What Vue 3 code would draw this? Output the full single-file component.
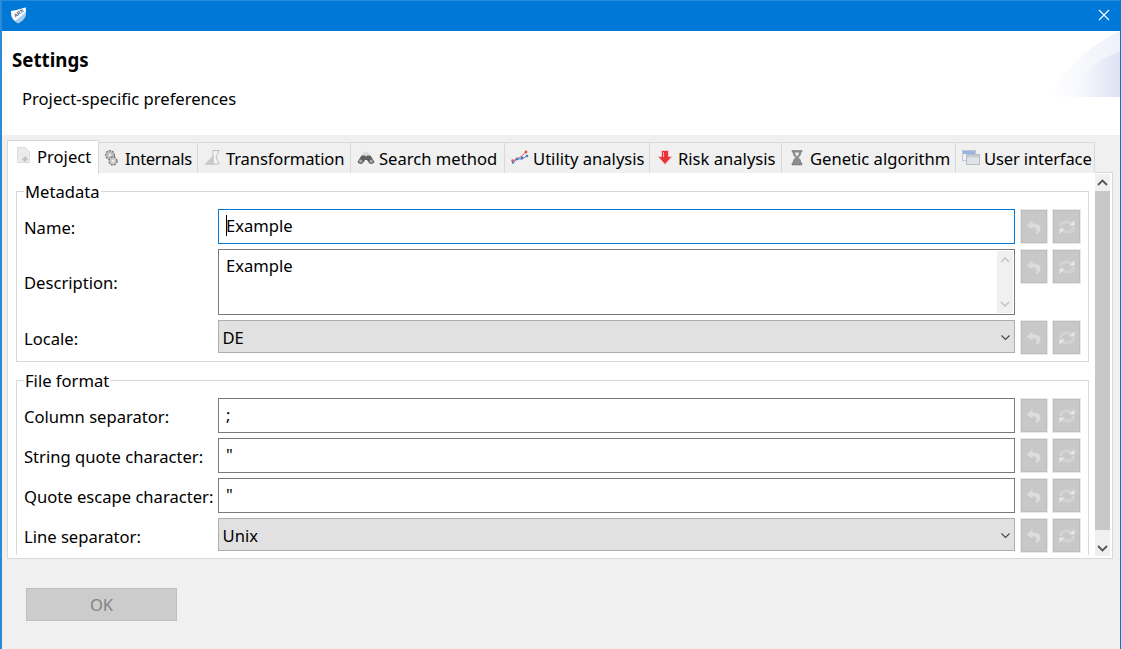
<script setup>
const tabs = [
  { key: 'project', label: 'Project', w: 92 },
  { key: 'internals', label: 'Internals', w: 99 },
  { key: 'transformation', label: 'Transformation', w: 153 },
  { key: 'search', label: 'Search method', w: 154 },
  { key: 'utility', label: 'Utility analysis', w: 145 },
  { key: 'risk', label: 'Risk analysis', w: 132 },
  { key: 'genetic', label: 'Genetic algorithm', w: 174 },
  { key: 'ui', label: 'User interface', w: 139 },
]
const groups = [
  {
    title: 'Metadata',
    cls: '',
    rows: [
      { label: 'Name:', type: 'focus', value: 'Example' },
      { label: 'Description:', type: 'area', value: 'Example' },
      { label: 'Locale:', type: 'select', value: 'DE' },
    ],
  },
  {
    title: 'File format',
    cls: 'second',
    rows: [
      { label: 'Column separator:', type: 'text', value: ';' },
      { label: 'String quote character:', type: 'text', value: '"' },
      { label: 'Quote escape character:', type: 'text', value: '"' },
      { label: 'Line separator:', type: 'select', value: 'Unix' },
    ],
  },
]
const actions = ['revert', 'refresh']
</script>

<template>
  <div class="window">
    <svg class="defs" width="0" height="0">
      <symbol id="ic-revert" viewBox="0 0 18 18">
        <path d="M7.5 2.5 L1.5 7.5 L7.5 11.5 V9 Q11.5 9 11.5 12.5 Q11.5 14.5 10 16 Q15.5 15 15.5 10.5 Q15.5 5.5 7.5 5.5 Z" fill="#dcdcdc" />
      </symbol>
      <symbol id="ic-refresh" viewBox="0 0 18 18">
        <path d="M2.5 9 Q3 4 9 4 Q12 4 14 6 M15.5 9 Q15 14 9 14 Q6 14 4 12" fill="none" stroke="#d3d3d3" stroke-width="3" />
        <path d="M11.5 7.5 H16.5 V2 Z" fill="#e8e8e8" />
        <path d="M6.5 10.5 H1.5 V16 Z" fill="#e8e8e8" />
      </symbol>
    </svg>

    <div class="titlebar">
      <svg class="logo" width="17" height="17" viewBox="0 0 17 17">
        <path d="M1 4 Q9 3 15.5 0.5 L16 8 Q15 13 8 16.5 Q3 14 1.5 9 Z" fill="#a9cdf0" />
        <path d="M1 4 L5 3.4 L11 1.8 L15.7 0.5 L15.9 5 L5 14 Q2.4 11.5 1.5 9 Z" fill="#fff" />
        <text x="0" y="0" transform="translate(5.6 10.8) rotate(-38)" class="logo-text">ARX</text>
      </svg>
      <svg class="close" width="12" height="12" viewBox="0 0 12 12">
        <path d="M1 1 L11 11 M11 1 L1 11" stroke="#fff" stroke-width="1.1" />
      </svg>
    </div>

    <header class="banner">
      <svg class="swoosh" width="73" height="66" viewBox="0 0 73 66">
        <defs>
          <linearGradient id="g1" x1="0" y1="0" x2="1" y2="0">
            <stop offset="0" stop-color="#ffffff" />
            <stop offset="1" stop-color="#eef1fa" />
          </linearGradient>
          <linearGradient id="g2" x1="0" y1="0" x2="1" y2="0">
            <stop offset="0" stop-color="#ffffff" />
            <stop offset="1" stop-color="#dde3f5" />
          </linearGradient>
        </defs>
        <path d="M0 66 Q30 20 73 0 L73 66 Z" fill="url(#g1)" />
        <path d="M20 66 Q40 30 73 21 L73 66 Z" fill="url(#g2)" />
      </svg>
      <h1 class="title">Settings</h1>
      <p class="subtitle">Project-specific preferences</p>
    </header>

    <main class="body">
      <nav class="tabs">
        <div
          v-for="(t, i) in tabs"
          :key="t.key"
          class="tab"
          :class="[t.key, { active: i === 0 }]"
          :style="{ width: t.w + 'px' }"
        >
          <svg class="tab-icon" width="18" height="18" viewBox="0 0 18 18">
            <g v-if="t.key === 'project'">
              <path d="M2.5 0.5 H10.5 L14.5 4.5 V15.5 H2.5 Z" fill="#ebebeb" stroke="#dcdcdc" />
              <path d="M7 12 L10.5 9 L13 12.5 L9.5 15 Z" fill="#c2c2c2" />
            </g>
            <g v-else-if="t.key === 'internals'">
              <circle cx="7" cy="6" r="4.4" fill="#bdbdbd" stroke="#808080" stroke-dasharray="2 1.2" stroke-width="1.4" />
              <circle cx="10" cy="12" r="4" fill="#cbcbcb" stroke="#777" stroke-dasharray="2 1.2" stroke-width="1.4" />
              <circle cx="7" cy="6" r="1.3" fill="#efefef" />
              <circle cx="10" cy="12" r="1.3" fill="#efefef" />
            </g>
            <g v-else-if="t.key === 'transformation'">
              <path d="M9 1.5 H15 L12 8 L15 15 H9 Z" fill="#f4f4f4" stroke="#bdbdbd" />
              <path d="M1 15.5 L9 7 V15.5 Z" fill="#cbcbcb" stroke="#bdbdbd" stroke-width=".6" />
            </g>
            <g v-else-if="t.key === 'search'">
              <path d="M5 5 Q9 0 13 5 L12 8 H6 Z" fill="#dcdcdc" />
              <path d="M4.5 6.5 H8 L9 8 L10 6.5 H13.5 L17.5 13 Q15 16.5 12 14 L10 11 H8 L6 14 Q3 16.5 0.5 13 Z" fill="#5e5e5e" />
              <circle cx="3.8" cy="12.2" r="1.6" fill="#adadad" />
              <circle cx="14.2" cy="12.2" r="1.6" fill="#adadad" />
            </g>
            <g v-else-if="t.key === 'utility'">
              <path d="M1 12 L6 10 L11 7 L15 2.5" fill="none" stroke="#e8615a" stroke-width="1" />
              <path d="M2 14 L6 10 L11 10 L16 7" fill="none" stroke="#5a86cc" stroke-width="1" />
              <circle cx="6" cy="10" r="1.4" fill="#4a78c2" />
              <circle cx="11" cy="9" r="1.4" fill="#4a78c2" />
              <circle cx="16" cy="7" r="1.3" fill="#4a78c2" />
              <circle cx="2" cy="13.5" r="1.2" fill="#4a78c2" />
              <circle cx="15" cy="3" r="1.4" fill="#e2533f" />
              <circle cx="1.5" cy="11.5" r="1.2" fill="#e2533f" />
            </g>
            <g v-else-if="t.key === 'risk'">
              <path d="M5.5 1.5 H12.5 V7.5 H16 L9 15.5 L2 7.5 H5.5 Z" fill="#e8343a" stroke="#f6c4c4" stroke-width="1" />
              <path d="M7.5 3 V8" stroke="#f9a9a9" />
            </g>
            <g v-else-if="t.key === 'genetic'">
              <path d="M4 1.5 H14 V3 H13 Q13 6.5 10 8.5 Q13 10.5 13 14 H14 V16 H4 V14 H5 Q5 10.5 8 8.5 Q5 6.5 5 3 H4 Z" fill="#8d8d8d" stroke="#6a6a6a" stroke-width=".5" />
              <path d="M7 3.5 H11 Q11 5.5 9 7.5 Q7 5.5 7 3.5 Z" fill="#ececec" />
            </g>
            <g v-else>
              <rect x="0.5" y="1.5" width="13" height="10" fill="#f0f2f5" stroke="#c2c7d0" />
              <rect x="1" y="2" width="12" height="3" fill="#96b5e2" />
              <rect x="4.5" y="5.5" width="13" height="10" fill="#dfe2e6" stroke="#babdc2" />
              <rect x="5" y="6" width="12" height="2.4" fill="#c6cbd3" />
            </g>
          </svg>
          <span>{{ t.label }}</span>
        </div>
      </nav>

      <section class="panel">
        <div class="scroll">
          <fieldset v-for="g in groups" :key="g.title" class="group" :class="g.cls">
            <legend>{{ g.title }}</legend>
            <div class="form">
              <template v-for="r in g.rows" :key="r.label">
                <label :class="{ sel: r.type === 'select' }">{{ r.label }}</label>
                <div v-if="r.type === 'area'" class="field area">
                  <span>{{ r.value }}</span>
                  <div class="mini-bar">
                    <svg width="10" height="6" viewBox="0 0 10 6"><path d="M1 5 L5 1 L9 5" fill="none" stroke="#bfbfbf" stroke-width="1.4" /></svg>
                    <svg width="10" height="6" viewBox="0 0 10 6"><path d="M1 1 L5 5 L9 1" fill="none" stroke="#bfbfbf" stroke-width="1.4" /></svg>
                  </div>
                </div>
                <div v-else-if="r.type === 'select'" class="field select">
                  {{ r.value }}
                  <svg width="9" height="6" viewBox="0 0 9 6"><path d="M0.5 0.5 L4.5 4.5 L8.5 0.5" fill="none" stroke="#444" stroke-width="1.1" /></svg>
                </div>
                <div v-else class="field" :class="{ focused: r.type === 'focus' }">
                  <span v-if="r.type === 'focus'" class="caret"></span>{{ r.value }}
                </div>
                <div v-for="a in actions" :key="a" class="act-cell">
                  <button class="act"><svg width="18" height="18"><use :href="'#ic-' + a" /></svg></button>
                </div>
              </template>
            </div>
          </fieldset>
        </div>
        <div class="vbar">
          <div class="vbtn"><svg width="11" height="7" viewBox="0 0 11 7"><path d="M1 6 L5.5 1.5 L10 6" fill="none" stroke="#555" stroke-width="1.8" /></svg></div>
          <div class="thumb"></div>
          <div class="vbtn bottom"><svg width="11" height="7" viewBox="0 0 11 7"><path d="M1 1 L5.5 5.5 L10 1" fill="none" stroke="#555" stroke-width="1.8" /></svg></div>
        </div>
      </section>

      <button class="ok">OK</button>
    </main>
  </div>
</template>

<style>
html, body { margin: 0; overflow: hidden; }
</style>

<style scoped>
.window {
  width: 1121px;
  height: 649px;
  box-sizing: border-box;
  display: flex;
  flex-direction: column;
  border-left: 2px solid #2a8ad8;
  border-right: 1px solid #0078d7;
  font-family: "Noto Sans", "Open Sans", sans-serif;
  font-size: 16.6px;
  color: #000;
  background: #f0f0f0;
  overflow: hidden;
}
.defs { position: absolute; }
.titlebar {
  height: 31px;
  flex: none;
  margin-left: -2px;
  padding: 6px 10px 0 10px;
  box-sizing: border-box;
  background: #0078d7;
  border-top: 1px solid #2a8ad8;
  display: flex;
  justify-content: space-between;
  align-items: flex-start;
}
.logo-text {
  font-family: "Liberation Sans", sans-serif;
  font-size: 5.2px;
  font-weight: 700;
  fill: #3d5f80;
}
.close { margin-top: 2px; }
.banner {
  position: relative;
  height: 104px;
  flex: none;
  background: #fff;
  padding: 0 0 0 10px;
  box-sizing: border-box;
}
.swoosh { position: absolute; right: 0; top: 0; }
.title {
  margin: 0;
  padding-top: 17px;
  font-size: 18.7px;
  line-height: 24px;
  font-weight: 700;
}
.subtitle {
  margin: 15px 0 0 10px;
  line-height: 24px;
}
.body {
  flex: 1;
  padding: 5px 0 0 5px;
  background: #f0f0f0;
}
.tabs {
  display: flex;
  height: 32px;
  position: relative;
  z-index: 1;
}
.tab {
  box-sizing: border-box;
  height: 31px;
  margin-top: 2px;
  border-top: 1px solid #d9d9d9;
  border-right: 1px solid #d9d9d9;
  background: #f0f0f0;
  display: flex;
  align-items: center;
  gap: 4px;
  padding-left: 6px;
  white-space: nowrap;
  flex: none;
}
.tab.internals { padding-left: 4px; letter-spacing: -0.35px; }
.tab.transformation, .tab.ui { letter-spacing: -0.15px; }
.tab.active {
  height: 34px;
  margin-top: 0;
  background: #fff;
  border-left: 1px solid #d9d9d9;
  padding-left: 7px;
  padding-bottom: 3px;
}
.tab-icon { flex: none; }
.panel {
  box-sizing: border-box;
  width: 1106px;
  height: 387px;
  background: #fff;
  border: 1px solid #d9d9d9;
  display: flex;
  padding-bottom: 3px;
}
.scroll {
  width: 1087px;
  flex: none;
  overflow: hidden;
  padding: 8px 0 0 8px;
  box-sizing: border-box;
}
.group {
  margin: 0;
  padding: 8px 0 7px 7px;
  width: 1073px;
  box-sizing: border-box;
  border: 1px solid #d9d9d9;
}
.group.second { margin-top: 8px; }
legend {
  height: 20px;
  padding: 2px 1px 0;
  box-sizing: border-box;
  line-height: 18px;
}
.form {
  display: grid;
  grid-template-columns: 188px 797px 26px 27px;
  column-gap: 6px;
  row-gap: 5px;
  align-items: start;
}
label {
  align-self: center;
  padding-top: 2px;
  line-height: 22px;
  white-space: nowrap;
}
label.sel { padding-top: 4px; }
.field {
  box-sizing: border-box;
  height: 35px;
  border: 1px solid #7a7a7a;
  background: #fff;
  padding: 0 7px 2px;
  display: flex;
  align-items: center;
  line-height: 22px;
}
.field.focused { border-color: #0078d7; }
.caret {
  width: 1px;
  height: 21px;
  background: #000;
  margin-right: -1px;
}
.field.area {
  height: 66px;
  align-items: flex-start;
  justify-content: space-between;
  padding: 5px 1px 1px 7px;
}
.mini-bar {
  width: 16px;
  align-self: stretch;
  margin-top: -4px;
  background: #f0f0f0;
  display: flex;
  flex-direction: column;
  align-items: center;
  justify-content: space-between;
  padding: 6px 0;
  box-sizing: border-box;
}
.field.select {
  height: 33px;
  background: #e1e1e1;
  border-color: #adadad;
  padding: 2px 4px 0 3.5px;
  justify-content: space-between;
}
.act-cell { padding-top: 1px; }
.act {
  display: flex;
  align-items: center;
  justify-content: center;
  box-sizing: border-box;
  width: 100%;
  height: 33px;
  padding: 0;
  margin: 0;
  background: #c8c8c8;
  border: 1px solid #bdbdbd;
  outline: 1px solid #e9e9e9;
}
.vbar {
  width: 15px;
  flex: none;
  background: #f0f0f0;
  display: flex;
  flex-direction: column;
  margin: 1px 0 -1px;
}
.vbtn {
  height: 17px;
  flex: none;
  display: flex;
  align-items: center;
  justify-content: center;
}
.vbtn.bottom { margin-top: auto; height: 16px; }
.thumb { height: 339px; background: #c8c8c8; flex: none; }
.ok {
  display: block;
  box-sizing: border-box;
  width: 151px;
  height: 33px;
  margin: 29px 0 0 19px;
  background: #cccccc;
  border: 1px solid #bfbfbf;
  font: inherit;
  color: #838383;
  padding: 0;
}
</style>
